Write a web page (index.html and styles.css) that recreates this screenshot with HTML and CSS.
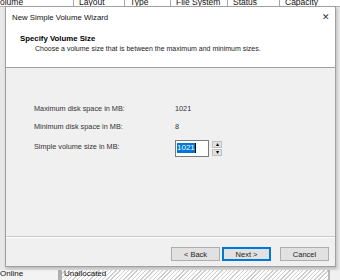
FILE: index.html
```html
<!DOCTYPE html>
<html lang="en">
<head>
	<title>New Simple Volume Wizard</title>
	<link rel="stylesheet" href="styles.css">
</head>
<body>

<div class="desktop">
	<div class="columns">
		<span class="col c1">olume</span>
		<span class="col c2">Layout</span>
		<span class="col c3">Type</span>
		<span class="col c4">File System</span>
		<span class="col c5">Status</span>
		<span class="col c6">Capacity</span>
	</div>
	<div class="disklist">
		<div class="side">Online</div>
		<div class="unalloc">Unallocated</div>
		<div class="edge"></div>
	</div>
</div>

<div class="dialog">
	<div class="titlebar">
		<span>New Simple Volume Wizard</span>
		<span class="close">&#x2715;</span>
	</div>
	<div class="header">
		<div class="heading">Specify Volume Size</div>
		<div class="sub">Choose a volume size that is between the maximum and minimum sizes.</div>
	</div>
	<div class="content">
		<div class="row"><span class="label">Maximum disk space in MB:</span><span>1021</span></div>
		<div class="row"><span class="label">Minimum disk space in MB:</span><span>8</span></div>
		<div class="row last">
			<span class="label">Simple volume size in MB:</span>
			<div class="spin">
				<div class="input"><span class="sel">1021</span><span class="caret"></span></div>
				<div class="arrows">
					<div class="arrow">&#9652;</div>
					<div class="arrow">&#9662;</div>
				</div>
			</div>
		</div>
	</div>
	<div class="footer">
		<button class="btn">&lt; Back</button>
		<button class="btn default">Next &gt;</button>
		<button class="btn cancel">Cancel</button>
	</div>
</div>

</body>
</html>
```
FILE: styles.css
```css
body {
	margin: 0;
	width: 340px;
	height: 280px;
	overflow: hidden;
	font-family: "Liberation Sans", Arial, sans-serif;
	font-size: 7.5px;
	color: #222;
	position: relative;
	background: #f0f0f0;
}

.desktop {
	height: 280px;
	display: flex;
	flex-direction: column;
}

.columns {
	height: 6px;
	display: flex;
	background: #fff;
	border-bottom: 1px solid #b5b5b5;
	overflow: hidden;
	font-size: 8.5px;
}

.col {
	line-height: 8px;
	margin-top: -2px;
	padding-left: 5px;
	border-left: 1px solid #a8a8a8;
	height: 8px;
	color: #111;
}

.c1 { width: 73px; border-left: 0; padding-left: 0; }
.c2 { width: 45px; }
.c3 { width: 40px; }
.c4 { width: 51px; }
.c5 { width: 46px; }
.c6 { flex: 1; }

.disklist {
	flex: 1;
	display: flex;
	align-items: flex-end;
	background: #e8e8e8;
}

.side {
	width: 58px;
	height: 10px;
	font-size: 8px;
	line-height: 8px;
	color: #111;
	background: #f3f3f3;
	border-right: 4px solid #b0b0b0;
}

.unalloc {
	flex: 1;
	height: 10px;
	padding-left: 2px;
	line-height: 8px;
	font-size: 8px;
	color: #111;
	background: repeating-linear-gradient(135deg, #fff 0 2px, #cfcfcf 2px 3px);
	overflow: hidden;
}

.edge {
	width: 10px;
	height: 10px;
	background: #f0f0f0;
	border-left: 2px solid #b8b8b8;
}

.dialog {
	position: absolute;
	left: 5px;
	top: 6px;
	width: 329px;
	height: 259px;
	border: 1px solid #a0a0a0;
	background: #f0f0f0;
	display: flex;
	flex-direction: column;
	box-shadow: 1px 2px 3px rgba(0, 0, 0, 0.2);
}

.titlebar {
	height: 20px;
	background: #fff;
	display: flex;
	justify-content: space-between;
	align-items: center;
	padding: 0 5px 0 6px;
	font-size: 7.8px;
	color: #111;
}

.close {
	font-size: 9px;
	color: #333;
}

.header {
	background: #fff;
	border-bottom: 1px solid #a0a0a0;
	padding-top: 7px;
	box-sizing: border-box;
	height: 41px;
}

.heading {
	padding-left: 14px;
	font-weight: bold;
	font-size: 7.8px;
	color: #000;
	line-height: 9px;
}

.sub {
	padding-left: 29px;
	margin-top: 1px;
	font-size: 7px;
	line-height: 9px;
	color: #222;
}

.content {
	flex: 1;
	padding: 35px 0 0 28px;
	display: flex;
	flex-direction: column;
	gap: 7px;
	border-bottom: 1px solid #c8c8c8;
}

.row {
	display: flex;
	align-items: center;
	height: 11px;
	font-size: 7.3px;
	color: #333;
}

.row.last {
	margin-top: 2px;
}

.label {
	width: 141px;
}

.spin {
	display: flex;
	align-items: center;
	gap: 3px;
	margin-top: 3px;
}

.input {
	width: 31px;
	height: 15px;
	border: 1px solid #7a7a7a;
	background: #fff;
	display: flex;
	align-items: center;
	padding-left: 1px;
}

.sel {
	background: #0078d7;
	color: #fff;
	font-size: 8px;
	line-height: 10px;
}

.caret {
	width: 1px;
	height: 10px;
	background: #000;
}

.arrows {
	width: 10px;
	height: 15px;
	display: flex;
	flex-direction: column;
	gap: 1px;
	background: #fff;
}

.arrow {
	flex: 1;
	background: #e1e1e1;
	border: 1px solid #c0c0c0;
	font-size: 6px;
	line-height: 5px;
	text-align: center;
	color: #000;
}

.footer {
	height: 29px;
	border-top: 1px solid #fff;
	display: flex;
	align-items: flex-start;
	padding: 9px 6px 0 0;
	box-sizing: border-box;
	justify-content: flex-end;
	gap: 2px;
}

.btn {
	width: 49px;
	height: 14px;
	background: #e1e1e1;
	border: 1px solid #adadad;
	font-family: "Liberation Sans", Arial, sans-serif;
	font-size: 7.5px;
	color: #222;
	padding: 0;
}

.btn.default {
	border: 1px solid #0078d7;
	box-shadow: inset 0 0 0 1px #0078d7;
}

.btn.cancel {
	margin-left: 7px;
}
```
